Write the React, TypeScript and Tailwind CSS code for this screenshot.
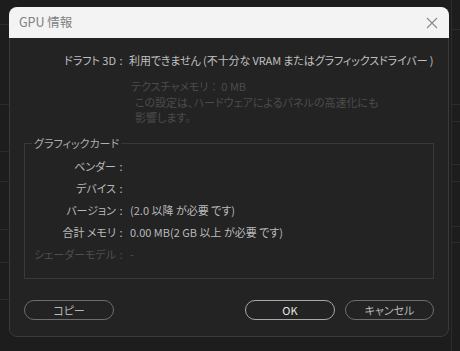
import React from "react";

const font = "font-['Noto_Sans_CJK_JP','Noto_Sans',sans-serif] [font-feature-settings:'palt']";

function Label({ text, w }: { text: string; w: number }) {
  return (
    <div className="flex shrink-0 justify-end whitespace-nowrap" style={{ width: w }}>
      <span>{text}</span>
      <span className="w-[10px] text-center">:</span>
    </div>
  );
}

function Row({ label, value, dim }: { label: string; value?: string; dim?: boolean }) {
  return (
    <div className={`flex h-[22px] items-center ${dim ? "text-[#4e4e4e]" : "text-[#bababa]"}`}>
      <Label text={label} w={101} />
      <div className="ml-[4px] whitespace-nowrap">{value}</div>
    </div>
  );
}

function Strip({ lines }: { lines: number[] }) {
  return (
    <div className="flex flex-col">
      {lines.map((h, i) => (
        <div key={i} className="border-b border-[#2c2c2c]" style={{ height: h }} />
      ))}
    </div>
  );
}

export default function App() {
  return (
    <div className={`flex h-[351px] w-[460px] bg-[#1d1d1d] text-[11px] ${font}`}>
      <div className="w-[9px] shrink-0">
        <Strip lines={[25, 80, 47, 30, 48, 33, 37]} />
      </div>
      <div className="pt-[7px]">
        <div className="flex h-[330px] w-[440px] flex-col rounded-[8px] border border-[#3a3a3a] bg-[#232323]">
          <div className="-m-px flex h-[31px] items-center justify-between rounded-t-[8px] bg-[#f3f3f3] pl-[10px] pr-[11px]">
            <span className="text-[12.5px] text-[#808080]">GPU 情報</span>
            <svg width="12" height="12" viewBox="0 0 12 12" className="text-[#8a8a8a]">
              <path d="M1 1L11 11M11 1L1 11" stroke="currentColor" strokeWidth="1.1" />
            </svg>
          </div>

          <div className="mt-[15px] flex h-[16px] items-center text-[#c0c0c0]">
            <Label text="ドラフト 3D" w={116} />
            <div className="ml-[3px] whitespace-nowrap tracking-[-0.1px]">利用できません (不十分な VRAM またはグラフィックスドライバー )</div>
          </div>

          <div className="ml-[121px] mt-[10px] flex h-[16px] items-center whitespace-nowrap text-[#4c4c4c]">
            テクスチャメモリ ：&nbsp; 0 MB
          </div>
          <div className="ml-[125px] mt-[1px] leading-[15px] text-[#4c4c4c]">
            <div>この設定は、ハードウェアによるパネルの高速化にも</div>
            <div>影響します。</div>
          </div>

          <fieldset className="mx-[14px] mt-[10px] h-[144px] border border-[#393939] px-0 pt-[4px]">
            <legend className="ml-[7px] px-[2px] text-[#adadad]">グラフィックカード</legend>
            <Row label="ベンダー" />
            <Row label="デバイス" />
            <Row label="バージョン" value=" (2.0 以降 が必要 です)" />
            <Row label="合計 メモリ" value="0.00 MB(2 GB 以上 が必要 です)" />
            <Row label="シェーダーモデル" value="-" dim />
          </fieldset>

          <div className="mx-[14px] mt-[21px] flex">
            <button className="flex h-[20px] w-[90px] items-center justify-center rounded-full border border-[#6e6e6e] text-[#b8b8b8]">
              コピー
            </button>
            <div className="flex-1" />
            <button className="flex h-[20px] w-[90px] items-center justify-center rounded-full border border-[#a8a8a8] text-[#e4e4e4]">
              OK
            </button>
            <button className="ml-[10px] flex h-[20px] w-[89px] items-center justify-center rounded-full border border-[#6e6e6e] text-[#b8b8b8]">
              キャンセル
            </button>
          </div>
        </div>
      </div>
      <div className="ml-[2px] w-[9px] shrink-0 border-l border-[#2c2c2c]">
        <Strip lines={[30, 75, 17, 43, 17, 45, 16]} />
      </div>
    </div>
  );
}
